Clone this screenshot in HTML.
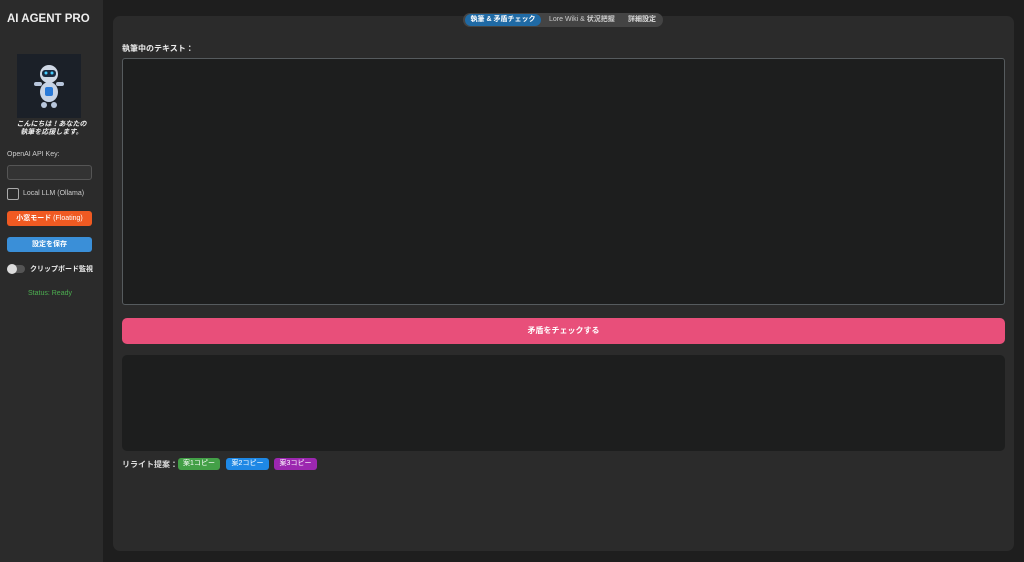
<!DOCTYPE html>
<html><head><meta charset="utf-8"><style>
*{box-sizing:border-box;margin:0;padding:0}
body{width:1024px;height:562px;background:#1e1e1e;font-family:"Liberation Sans","Noto Sans CJK JP",sans-serif;color:#ddd;position:relative;overflow:hidden}
.sb{position:absolute;left:0;top:0;width:103px;height:562px;background:#2b2b2b}
.main{position:absolute;left:113px;top:16px;width:901px;height:535px;background:#2b2b2b;border-radius:7px}
.abs{position:absolute}
</style></head><body>
<div class="sb">
<div class="abs" style="left:7px;top:13px;font-size:11.5px;font-weight:bold;color:#eee">AI AGENT PRO</div>
<div class="abs" style="left:17px;top:54px;width:64px;height:64px;background:#1b2028">
<svg width="64" height="64"><circle cx="32" cy="20" r="9" fill="#cfd8e6"/><rect x="25" y="16" width="14" height="7" rx="3" fill="#1a2a40"/><circle cx="29" cy="19" r="1.5" fill="#4cf"/><circle cx="35" cy="19" r="1.5" fill="#4cf"/><ellipse cx="32" cy="38" rx="9" ry="10" fill="#c8d4e6"/><rect x="28" y="33" width="8" height="9" rx="2" fill="#2a7ad8"/><rect x="17" y="28" width="8" height="4" rx="2" fill="#b8c6dc"/><rect x="39" y="28" width="8" height="4" rx="2" fill="#b8c6dc"/><ellipse cx="27" cy="51" rx="3" ry="3" fill="#b8c6dc"/><ellipse cx="37" cy="51" rx="3" ry="3" fill="#b8c6dc"/></svg></div>
<div class="abs" style="left:0;width:103px;top:121px;text-align:center;font-size:7px;font-weight:bold;font-style:italic;line-height:8px;color:#eee">こんにちは！あなたの<br>執筆を応援します。</div>
<div class="abs" style="left:7px;top:151px;font-size:7px;color:#ccc">OpenAI API Key:</div>
<div class="abs" style="left:7px;top:165px;width:85px;height:15px;border:1px solid #555;border-radius:3px;background:#333"></div>
<div class="abs" style="left:7px;top:188px;width:12px;height:12px;border:1.5px solid #aaa;border-radius:2px"></div>
<div class="abs" style="left:23px;top:190px;font-size:7px;color:#ccc">Local LLM (Ollama)</div>
<div class="abs" style="left:7px;top:211px;width:85px;height:15px;background:#f05a22;border-radius:3px;color:#fff;font-size:7px;text-align:center;line-height:15px"><b>小窓モード</b> (Floating)</div>
<div class="abs" style="left:7px;top:237px;width:85px;height:15px;background:#3a8fd8;border-radius:3px;color:#fff;font-size:7px;font-weight:bold;text-align:center;line-height:15px">設定を保存</div>
<div class="abs" style="left:7px;top:265px;width:18px;height:8px;background:#555;border-radius:4px"></div>
<div class="abs" style="left:7px;top:264px;width:10px;height:10px;background:#ddd;border-radius:50%"></div>
<div class="abs" style="left:30px;top:264px;font-size:7px;font-weight:bold;color:#eee">クリップボード監視</div>
<div class="abs" style="left:0;width:100px;top:290px;text-align:center;font-size:7px;color:#4caf50">Status: Ready</div>
</div>
<div class="main">
<div class="abs" style="left:350px;top:-3px;width:200px;height:14px;background:#444;border-radius:7px"></div>
<div class="abs" style="left:352px;top:-2px;width:76px;height:12px;background:#1f6aa5;border-radius:6px;color:#fff;font-size:7px;font-weight:bold;text-align:center;line-height:12px">執筆 &amp; 矛盾チェック</div>
<div class="abs" style="left:436px;top:-2px;font-size:7px;line-height:12px;color:#ccc">Lore Wiki &amp; <b>状況把握</b></div>
<div class="abs" style="left:515px;top:-2px;font-size:7px;line-height:12px;color:#ddd;font-weight:bold">詳細設定</div>
<div class="abs" style="left:9px;top:27px;font-size:8px;font-weight:bold;color:#eee">執筆中のテキスト：</div>
<div class="abs" style="left:9px;top:42px;width:883px;height:247px;background:#1d1e1e;border:1px solid #565b5e;border-radius:3px"></div>
<div class="abs" style="left:9px;top:302px;width:883px;height:26px;background:#e84f7a;border-radius:5px;color:#fff;font-size:8px;font-weight:bold;text-align:center;line-height:26px">矛盾をチェックする</div>
<div class="abs" style="left:9px;top:339px;width:883px;height:96px;background:#1d1e1e;border-radius:5px"></div>
<div class="abs" style="left:9px;top:443px;font-size:8px;font-weight:bold;color:#ddd">リライト提案：</div>
<div class="abs" style="left:65px;top:442px;width:42px;height:12px;background:#43a047;border-radius:3px;color:#fff;font-size:7px;text-align:center;line-height:12px">案1コピー</div>
<div class="abs" style="left:113px;top:442px;width:43px;height:12px;background:#1e88e5;border-radius:3px;color:#fff;font-size:7px;text-align:center;line-height:12px">案2コピー</div>
<div class="abs" style="left:161px;top:442px;width:43px;height:12px;background:#9c27b0;border-radius:3px;color:#fff;font-size:7px;text-align:center;line-height:12px">案3コピー</div>
</div>
</body></html>
